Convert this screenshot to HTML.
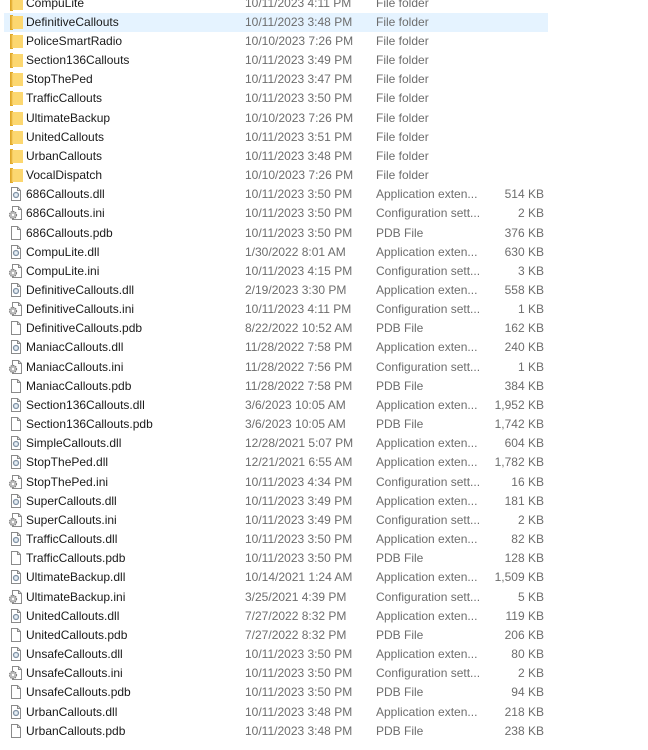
<!DOCTYPE html>
<html><head><meta charset="utf-8"><style>
html,body{margin:0;padding:0;background:#fff;width:648px;height:750px;overflow:hidden;position:relative;font-family:"Liberation Sans",sans-serif;font-size:12px;}
.r{position:absolute;left:4px;width:544px;height:19px;}
.r.sel{background:#e5f3ff;}
.r span{position:absolute;top:3px;white-space:nowrap;line-height:13px;}
.n{left:22px;color:#1a1a1a;}
.d{left:241px;color:#6d6d6d;}
.t{left:372px;color:#6d6d6d;}
.s{right:4px;color:#6d6d6d;}
.r svg{position:absolute;left:4px;top:1px;}
</style></head><body>
<svg width="0" height="0" style="position:absolute">
<defs>
<symbol id="fold" viewBox="0 0 16 16"><path d="M2 1h3v15H2z" fill="#e0a92a"/><path d="M4 2h11v13H4z" fill="#fcd770"/><path d="M4 2v13" stroke="#f0c050" stroke-width="1"/></symbol>
<symbol id="page" viewBox="0 0 16 16"><path d="M3.5 1.5h6l3 3v10h-9z" fill="#fff" stroke="#8a8a8a"/><path d="M9.5 1.5v3h3" fill="none" stroke="#8a8a8a"/></symbol>
<symbol id="dll" viewBox="0 0 16 16"><path d="M3.5 1.5h6l3 3v10h-9z" fill="#fff" stroke="#8a8a8a"/><path d="M9.5 1.5v3h3" fill="none" stroke="#8a8a8a"/><circle cx="8" cy="9" r="2.6" fill="#c9d6e2" stroke="#7d8ea0"/><circle cx="8" cy="9" r="0.9" fill="#fff"/></symbol>
<symbol id="ini" viewBox="0 0 16 16"><path d="M4.5 1.5h6l3 3v10h-9z" fill="#fff" stroke="#8a8a8a"/><path d="M10.5 1.5v3h3" fill="none" stroke="#8a8a8a"/><circle cx="5" cy="10" r="3.6" fill="#b9b9b9" stroke="#777" stroke-dasharray="1.4 1"/><circle cx="5" cy="10" r="1.2" fill="#fff"/></symbol>
</defs></svg>
<div id="list"></div>
<script>
var rows=[
["f","CompuLite","10/11/2023 4:11 PM","File folder",""],
["f","DefinitiveCallouts","10/11/2023 3:48 PM","File folder",""],
["f","PoliceSmartRadio","10/10/2023 7:26 PM","File folder",""],
["f","Section136Callouts","10/11/2023 3:49 PM","File folder",""],
["f","StopThePed","10/11/2023 3:47 PM","File folder",""],
["f","TrafficCallouts","10/11/2023 3:50 PM","File folder",""],
["f","UltimateBackup","10/10/2023 7:26 PM","File folder",""],
["f","UnitedCallouts","10/11/2023 3:51 PM","File folder",""],
["f","UrbanCallouts","10/11/2023 3:48 PM","File folder",""],
["f","VocalDispatch","10/10/2023 7:26 PM","File folder",""],
["d","686Callouts.dll","10/11/2023 3:50 PM","Application exten...","514 KB"],
["i","686Callouts.ini","10/11/2023 3:50 PM","Configuration sett...","2 KB"],
["p","686Callouts.pdb","10/11/2023 3:50 PM","PDB File","376 KB"],
["d","CompuLite.dll","1/30/2022 8:01 AM","Application exten...","630 KB"],
["i","CompuLite.ini","10/11/2023 4:15 PM","Configuration sett...","3 KB"],
["d","DefinitiveCallouts.dll","2/19/2023 3:30 PM","Application exten...","558 KB"],
["i","DefinitiveCallouts.ini","10/11/2023 4:11 PM","Configuration sett...","1 KB"],
["p","DefinitiveCallouts.pdb","8/22/2022 10:52 AM","PDB File","162 KB"],
["d","ManiacCallouts.dll","11/28/2022 7:58 PM","Application exten...","240 KB"],
["i","ManiacCallouts.ini","11/28/2022 7:56 PM","Configuration sett...","1 KB"],
["p","ManiacCallouts.pdb","11/28/2022 7:58 PM","PDB File","384 KB"],
["d","Section136Callouts.dll","3/6/2023 10:05 AM","Application exten...","1,952 KB"],
["p","Section136Callouts.pdb","3/6/2023 10:05 AM","PDB File","1,742 KB"],
["d","SimpleCallouts.dll","12/28/2021 5:07 PM","Application exten...","604 KB"],
["d","StopThePed.dll","12/21/2021 6:55 AM","Application exten...","1,782 KB"],
["i","StopThePed.ini","10/11/2023 4:34 PM","Configuration sett...","16 KB"],
["d","SuperCallouts.dll","10/11/2023 3:49 PM","Application exten...","181 KB"],
["i","SuperCallouts.ini","10/11/2023 3:49 PM","Configuration sett...","2 KB"],
["d","TrafficCallouts.dll","10/11/2023 3:50 PM","Application exten...","82 KB"],
["p","TrafficCallouts.pdb","10/11/2023 3:50 PM","PDB File","128 KB"],
["d","UltimateBackup.dll","10/14/2021 1:24 AM","Application exten...","1,509 KB"],
["i","UltimateBackup.ini","3/25/2021 4:39 PM","Configuration sett...","5 KB"],
["d","UnitedCallouts.dll","7/27/2022 8:32 PM","Application exten...","119 KB"],
["p","UnitedCallouts.pdb","7/27/2022 8:32 PM","PDB File","206 KB"],
["d","UnsafeCallouts.dll","10/11/2023 3:50 PM","Application exten...","80 KB"],
["i","UnsafeCallouts.ini","10/11/2023 3:50 PM","Configuration sett...","2 KB"],
["p","UnsafeCallouts.pdb","10/11/2023 3:50 PM","PDB File","94 KB"],
["d","UrbanCallouts.dll","10/11/2023 3:48 PM","Application exten...","218 KB"],
["p","UrbanCallouts.pdb","10/11/2023 3:48 PM","PDB File","238 KB"]
];
var ic={f:"fold",p:"page",d:"dll",i:"ini"},h="";
rows.forEach(function(r,k){
 var top=(-6.4+k*19.16).toFixed(2);
 h+='<div class="r'+(k==1?' sel':'')+'" style="top:'+top+'px"><svg width="16" height="16"><use href="#'+ic[r[0]]+'"/></svg><span class="n">'+r[1]+'</span><span class="d">'+r[2]+'</span><span class="t">'+r[3]+'</span><span class="s">'+r[4]+'</span></div>';
});
document.getElementById("list").innerHTML=h;
</script>
</body></html>
